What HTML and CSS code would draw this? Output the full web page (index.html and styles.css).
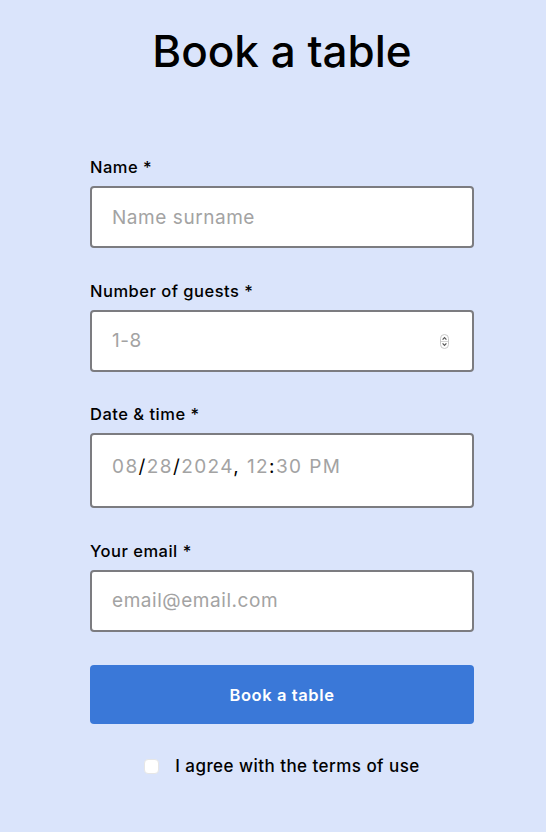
FILE: index.html
```html
<!DOCTYPE html>
<html lang="en">
<head>
<meta charset="utf-8">
<title>Book a table</title>
<link rel="stylesheet" href="styles.css">
</head>
<body>
<main class="page">
  <h1 class="title">Book a table</h1>
  <form class="form">
    <div class="field">
      <label class="label" for="name">Name *</label>
      <input class="input" id="name" type="text" placeholder="Name surname">
    </div>
    <div class="field">
      <label class="label" for="guests">Number of guests *</label>
      <div class="input-wrap">
        <input class="input" id="guests" type="text" placeholder="1-8">
        <svg class="spinner" width="9" height="15" viewBox="0 0 9 15" aria-hidden="true">
          <rect x="0.5" y="0.5" width="8" height="14" rx="4" fill="none" stroke="#c8c8c8" stroke-width="1"/>
          <line x1="1" y1="7.5" x2="8" y2="7.5" stroke="#d4d4d4" stroke-width="1"/>
          <path d="M2.6 5.6 L4.5 3.6 L6.4 5.6" fill="none" stroke="#555" stroke-width="1.2"/>
          <path d="M2.6 9.4 L4.5 11.4 L6.4 9.4" fill="none" stroke="#555" stroke-width="1.2"/>
        </svg>
      </div>
    </div>
    <div class="field">
      <label class="label">Date &amp; time *</label>
      <div class="input input-date"><span class="date-text"><span class="dim">08</span>/<span class="dim">28</span>/<span class="dim">2024</span>, <span class="dim">12</span>:<span class="dim">30 PM</span></span></div>
    </div>
    <div class="field">
      <label class="label" for="email">Your email *</label>
      <input class="input" id="email" type="email" placeholder="email@email.com">
    </div>
    <button class="submit" type="button">Book a table</button>
    <label class="agree"><input class="check" type="checkbox"><span>I agree with the terms of use</span></label>
  </form>
</main>
</body>
</html>
```
FILE: styles.css
```css
* { box-sizing: border-box; }

html, body {
  margin: 0;
  padding: 0;
}

body {
  background: #dae4fb;
  font-family: Inter, "Noto Sans", "Liberation Sans", sans-serif;
  color: #000;
  padding-left: 18px;
}

.page {
  width: 384px;
  margin: 0 auto;
  padding-top: 25px;
}

.title {
  margin: 0;
  font-size: 44px;
  line-height: 53px;
  font-weight: 500;
  text-align: center;
}

.form {
  display: flex;
  flex-direction: column;
  margin-top: 80px;
}

.field {
  display: flex;
  flex-direction: column;
  gap: 10px;
  margin-bottom: 33.5px;
}

.label {
  font-size: 16.5px;
  line-height: 18px;
  font-weight: 500;
  letter-spacing: 0.5px;
}

.input-wrap {
  position: relative;
}

.input {
  display: block;
  width: 100%;
  height: 62px;
  margin: 0;
  padding: 0 20px;
  border: 2px solid #7c7c80;
  border-radius: 4px;
  background: #fff;
  font-family: inherit;
  font-size: 19px;
  letter-spacing: 0.55px;
  color: #000;
  outline: none;
}

.input::placeholder {
  color: #a3a3a3;
}

.spinner {
  position: absolute;
  right: 25px;
  top: 24px;
}

.input-date {
  height: 75px;
  padding-top: 0;
  padding-bottom: 8px;
  display: flex;
  align-items: center;
}

.date-text {
  font-size: 19px;
  letter-spacing: 1.4px;
  white-space: pre;
}

.dim {
  color: #a3a3a3;
}

.submit {
  height: 59px;
  margin: 0;
  border: none;
  border-radius: 4px;
  background: #3a78d8;
  color: #fff;
  font-family: inherit;
  font-size: 16.5px;
  letter-spacing: 0.6px;
  font-weight: 600;
}

.agree {
  display: flex;
  align-items: center;
  justify-content: center;
  gap: 16px;
  margin-top: 32px;
  font-size: 17px;
  line-height: 20px;
  letter-spacing: 0.45px;
  font-weight: 500;
}

.check {
  appearance: none;
  -webkit-appearance: none;
  width: 15px;
  height: 15px;
  margin: 0;
  border: 1px solid #e6e6e6;
  border-radius: 4px;
  background: #fff;
}
```
